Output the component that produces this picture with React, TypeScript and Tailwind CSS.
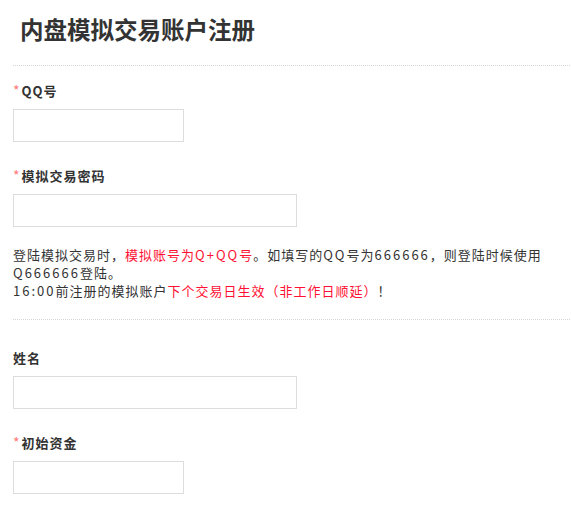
const font = 'font-["Microsoft_YaHei","Noto_Sans_CJK_SC",sans-serif]'

export default function App() {
  return (
    <div className={`min-h-[505px] w-[571px] bg-white pl-[13px] pr-px text-[#333] ${font}`}>
      <h1 className="pl-[7px] pt-[13px] text-[23.5px] font-bold leading-[32px]">内盘模拟交易账户注册</h1>
      <div className="mt-[20px] border-t border-dotted border-[#d4d4d4]" />

      <Field label="QQ号" required width="w-[171px]" className="mt-[16px]" />
      <Field label="模拟交易密码" required width="w-[284px]" className="mt-[25px]" />

      <p className="mt-[19px] text-[13px] leading-[18px] tracking-[1px]">
        登陆模拟交易时，<span className="text-[#ff1133]">模拟账号为<L>Q+QQ</L>号</span>。如填写的<L>QQ</L>号为<L>666666</L>，则登陆时候使用<L>Q666666</L>登陆。
        <br />
        <L>16:00</L>前注册的模拟账户<span className="text-[#ff1133]">下个交易日生效（非工作日顺延）</span>！
      </p>

      <div className="mt-[19px] border-t border-dotted border-[#d4d4d4]" />

      <Field label="姓名" width="w-[284px]" className="mt-[29px]" />
      <Field label="初始资金" required width="w-[171px]" className="mt-[25px]" />
    </div>
  )
}

function L({ children }: { children: string }) {
  return <span className="tracking-[2px]">{children}</span>
}

function Field({ label, required, width, className }: { label: string; required?: boolean; width: string; className: string }) {
  return (
    <div className={className}>
      <div className="h-[18px] text-[13px] font-bold leading-[18px] tracking-[1px]">
        {required && <span className="mr-px text-[14px] font-normal leading-none text-[#f77]">*</span>}
        {label}
      </div>
      <input className={`mt-[9px] block h-[33px] ${width} border border-[#ddd] bg-white px-2 text-[13px] outline-none`} />
    </div>
  )
}
